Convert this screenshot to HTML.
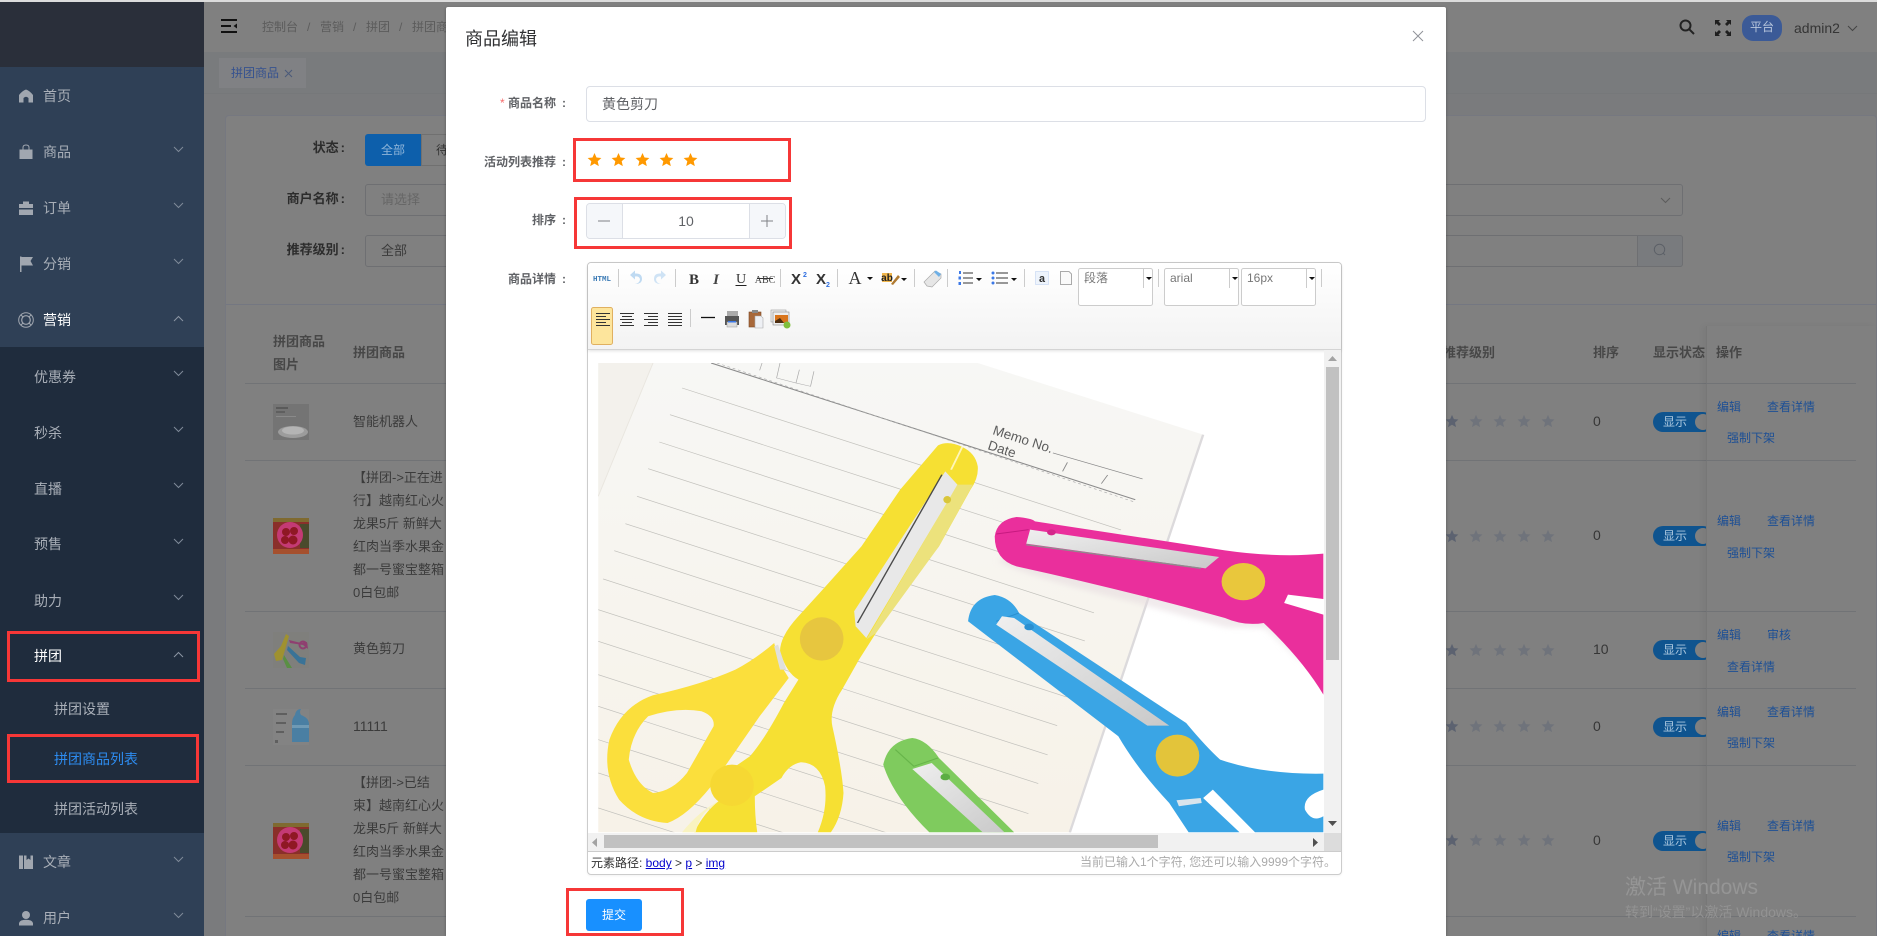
<!DOCTYPE html>
<html lang="zh">
<head>
<meta charset="utf-8">
<title>商品编辑</title>
<style>
html{margin:0;padding:0;width:1877px;height:936px;overflow:hidden;background:#7a7b7d}
body{margin:0;padding:0;background:#7a7b7d;position:relative;width:1877px;height:936px;overflow:hidden;font-family:"Liberation Sans","Noto Sans CJK SC",sans-serif;font-size:13px;color:#3a3a3a}
div,span,a{position:absolute;white-space:nowrap;line-height:20px}
svg{position:absolute;overflow:hidden}
.b{box-sizing:border-box}
.side{color:#a9afb8;font-size:14px}
.lab{font-size:13px;font-weight:700;color:#2c2c2c;text-align:right;width:130px;left:215px}
.lab u,.ml u{position:static;text-decoration:none;margin-left:2px}
.ml u{margin-left:6px}
.th{font-size:13px;font-weight:700;color:#474747}
.td{font-size:13px;color:#3b3b3b;left:353px}
.num{font-size:14px;color:#363636;left:1593px}
.lk{font-size:12px;color:#1d4f95}
.line{left:245px;width:1611px;height:1px;background:#717376}
.sw{left:1653px;width:60px;height:20px;border-radius:10px;background:#0f548f;overflow:hidden}
.sw span{left:10px;top:0;font-size:12px;color:#a9c6de}
.sw i{position:absolute;left:42px;top:2px;width:16px;height:16px;border-radius:50%;background:#808080}
.ml{font-size:12px;font-weight:700;color:#606266;text-align:right;width:130px;left:436px}
.red{box-sizing:border-box;border:3px solid #f63737;z-index:50}
</style>
</head>
<body>
<svg width="0" height="0" style="position:absolute"><defs>
<symbol id="st" viewBox="0 0 24 24"><path d="M12 1.500l3.200 7.200 7.800.8-5.900 5.200 1.800 7.800-6.900-4-6.900 4 1.800-7.800L1 9.500l7.800-.8z"/></symbol>
<symbol id="ch" viewBox="0 0 11 7"><path d="M1 1l4.500 4.500L10 1" fill="none" stroke="currentColor" stroke-width="1"/></symbol>
<symbol id="up" viewBox="0 0 11 7"><path d="M1 6L5.500 1.500 10 6" fill="none" stroke="currentColor" stroke-width="1"/></symbol>
</defs></svg>

<!-- top strip -->
<div style="left:0;top:0;width:1877px;height:2px;background:#dcdcdc;z-index:60"></div>

<!-- sidebar -->
<div style="left:0;top:2px;width:204px;height:65px;background:#2a2f3a"></div>
<div style="left:0;top:67px;width:204px;height:280px;background:#2f4056"></div>
<div style="left:0;top:347px;width:204px;height:486px;background:#1f2c3d"></div>
<div style="left:0;top:833px;width:204px;height:103px;background:#2f4056"></div>

<svg style="left:18px;top:88px" width="16" height="16" fill="#a1a7b0"><path d="M8 1.500Q12 3 15 7V14.500H10.500V10Q8 7.500 5.500 10V14.500H1V7Q4 3 8 1.500Z"/></svg>
<div class="side" style="left:43px;top:86px">首页</div>
<svg style="left:18px;top:144px" width="16" height="16" fill="#a1a7b0"><path d="M1.500 5.500H14.500V15H1.500Z"/><path d="M5 6V3.500Q5 1 8 1Q11 1 11 3.500V6" fill="none" stroke="#a1a7b0"/></svg>
<div class="side" style="left:43px;top:142px">商品</div>
<svg style="left:18px;top:200px" width="16" height="16" fill="#a1a7b0"><path d="M5 4V1.500H11V4H15V8H1V4ZM1 9.500H15V15H1Z"/></svg>
<div class="side" style="left:43px;top:198px">订单</div>
<svg style="left:18px;top:256px" width="16" height="16" fill="#a1a7b0"><path d="M2 .5H3.500V16H2ZM3.500 1H15L12.500 5 15 9.500H3.500Z"/></svg>
<div class="side" style="left:43px;top:254px">分销</div>
<svg style="left:18px;top:312px" width="16" height="16" fill="none" stroke="#a1a7b0"><circle cx="8" cy="8" r="7.300"/><circle cx="8" cy="8" r="4.300" stroke-width="1.200"/><path d="M3 3l2 2M13 3l-2 2M3 13l2-2M13 13l-2-2"/></svg>
<div class="side" style="left:43px;top:310px;color:#fff">营销</div>
<div class="side" style="left:34px;top:367px">优惠券</div>
<div class="side" style="left:34px;top:423px">秒杀</div>
<div class="side" style="left:34px;top:479px">直播</div>
<div class="side" style="left:34px;top:534px">预售</div>
<div class="side" style="left:34px;top:591px">助力</div>
<div class="side" style="left:34px;top:646px;color:#fff">拼团</div>
<div class="side" style="left:54px;top:699px">拼团设置</div>
<div class="side" style="left:54px;top:749px;color:#2d8cf0">拼团商品列表</div>
<div class="side" style="left:54px;top:799px">拼团活动列表</div>
<svg style="left:18px;top:854px" width="16" height="16" fill="#a1a7b0"><path d="M1 1.500H5V15H1ZM6 1.500H8.500V6L10.500 4.500 12.500 6V1.500H15V15H6Z"/></svg>
<div class="side" style="left:43px;top:852px">文章</div>
<svg style="left:18px;top:910px" width="16" height="16" fill="#a1a7b0"><circle cx="8" cy="5" r="4"/><path d="M1 15.500V13Q2 9.800 8 9.800Q14 9.800 15 13V15.500Z"/></svg>
<div class="side" style="left:43px;top:908px">用户</div>

<svg style="left:173px;top:146px;color:#7f8a99" width="11" height="7"><use href="#ch"/></svg>
<svg style="left:173px;top:202px;color:#7f8a99" width="11" height="7"><use href="#ch"/></svg>
<svg style="left:173px;top:258px;color:#7f8a99" width="11" height="7"><use href="#ch"/></svg>
<svg style="left:173px;top:315px;color:#8b95a3" width="11" height="7"><use href="#up"/></svg>
<svg style="left:173px;top:370px;color:#7f8a99" width="11" height="7"><use href="#ch"/></svg>
<svg style="left:173px;top:426px;color:#7f8a99" width="11" height="7"><use href="#ch"/></svg>
<svg style="left:173px;top:482px;color:#7f8a99" width="11" height="7"><use href="#ch"/></svg>
<svg style="left:173px;top:538px;color:#7f8a99" width="11" height="7"><use href="#ch"/></svg>
<svg style="left:173px;top:594px;color:#7f8a99" width="11" height="7"><use href="#ch"/></svg>
<svg style="left:173px;top:651px;color:#8b95a3" width="11" height="7"><use href="#up"/></svg>
<svg style="left:173px;top:856px;color:#7f8a99" width="11" height="7"><use href="#ch"/></svg>
<svg style="left:173px;top:912px;color:#7f8a99" width="11" height="7"><use href="#ch"/></svg>

<!-- header -->
<div style="left:204px;top:2px;width:1673px;height:50px;background:#808080"></div>
<svg style="left:221px;top:18px" width="17" height="16" fill="#111"><path d="M0 1H16V3H0ZM0 7H10V9H0ZM0 13H16V15H0ZM16 5.500V10.500L12.500 8Z"/></svg>
<div style="left:262px;top:17px;font-size:12px;color:#5c5c5c">控制台</div>
<div style="left:307px;top:17px;font-size:12px;color:#5c5c5c">/</div>
<div style="left:320px;top:17px;font-size:12px;color:#5c5c5c">营销</div>
<div style="left:353px;top:17px;font-size:12px;color:#5c5c5c">/</div>
<div style="left:366px;top:17px;font-size:12px;color:#5c5c5c">拼团</div>
<div style="left:399px;top:17px;font-size:12px;color:#5c5c5c">/</div>
<div style="left:412px;top:17px;font-size:12px;color:#5c5c5c">拼团商品</div>

<svg style="left:1679px;top:19px" width="16" height="16" fill="none" stroke="#222" stroke-width="2"><circle cx="6.500" cy="6.500" r="5"/><path d="M10.300 10.300L15 15"/></svg>
<svg style="left:1715px;top:20px" width="16" height="16" fill="#1f1f1f"><path d="M0 0H5L3.500 1.500 6 4 4 6 1.500 3.500 0 5ZM16 0V5L14.500 3.500 12 6 10 4 12.500 1.500 11 0ZM0 16V11L1.500 12.500 4 10 6 12 3.500 14.500 5 16ZM16 16H11L12.500 14.500 10 12 12 10 14.500 12.500 16 11Z"/></svg>
<div style="left:1742px;top:15px;width:40px;height:26px;border-radius:11px;background:#3b5a97"></div>
<div style="left:1750px;top:17px;font-size:12px;color:#b8c6dc">平台</div>
<div style="left:1794px;top:18px;font-size:14px;color:#353535">admin2</div>
<svg style="left:1847px;top:25px;color:#444" width="11" height="7"><use href="#ch"/></svg>

<!-- tabs -->
<div style="left:204px;top:52px;width:1673px;height:42px;background:#797b7d;border-bottom:1px solid #76787a;box-sizing:border-box"></div>
<div style="left:219px;top:58px;width:87px;height:30px;background:#808184"></div>
<div style="left:231px;top:63px;font-size:12px;color:#36528f">拼团商品</div>
<svg style="left:284px;top:69px" width="9" height="9" stroke="#4a5a7a" fill="none"><path d="M1 1l7 7M8 1l-7 7"/></svg>

<!-- card -->
<div class="b" style="left:225px;top:115px;width:1652px;height:821px;background:#808080;border:1px solid #767880;border-bottom:0;border-radius:4px 4px 0 0"></div>
<div style="left:226px;top:304px;width:1650px;height:1px;background:#747781"></div>

<div class="lab" style="top:138px">状态<u>:</u></div>
<div style="left:365px;top:134px;width:56px;height:32px;background:#0d5fab;border-radius:3px 0 0 3px"></div>
<div style="left:381px;top:140px;font-size:12px;color:#8fb5d9">全部</div>
<div class="b" style="left:421px;top:134px;width:40px;height:32px;border:1px solid #707070"></div>
<div style="left:436px;top:140px;font-size:12px;color:#333">待</div>

<div class="lab" style="top:189px">商户名称<u>:</u></div>
<div class="b" style="left:365px;top:184px;width:1318px;height:32px;border:1px solid #6e6f72;border-radius:3px"></div>
<div style="left:381px;top:190px;font-size:13px;color:#666">请选择</div>
<svg style="left:1660px;top:197px;color:#5c5c5c" width="11" height="7"><use href="#ch"/></svg>

<div class="lab" style="top:240px">推荐级别<u>:</u></div>
<div class="b" style="left:365px;top:235px;width:1318px;height:32px;border:1px solid #6e6f72;border-radius:3px"></div>
<div style="left:381px;top:241px;font-size:13px;color:#3a3a3a">全部</div>
<div class="b" style="left:1637px;top:235px;width:46px;height:32px;background:#797b7e;border:1px solid #6e6f72;border-radius:0 3px 3px 0"></div>
<svg style="left:1653px;top:243px" width="14" height="14" fill="none" stroke="#5c6067"><circle cx="6.500" cy="6.500" r="5.200"/><path d="M10 10l2 2"/></svg>

<!-- table -->
<div class="th" style="left:273px;top:332px">拼团商品</div>
<div class="th" style="left:273px;top:355px">图片</div>
<div class="th" style="left:353px;top:343px">拼团商品</div>
<div class="th" style="left:1443px;top:343px">推荐级别</div>
<div class="th" style="left:1593px;top:343px">排序</div>
<div class="th" style="left:1653px;top:343px">显示状态</div>

<div class="line" style="top:383px"></div>
<div class="line" style="top:460px"></div>
<div class="line" style="top:611px"></div>
<div class="line" style="top:688px"></div>
<div class="line" style="top:765px"></div>
<div class="line" style="top:916px"></div>

<div class="td" style="top:412px">智能机器人</div>
<div class="td" style="top:468px">【拼团-&gt;正在进</div>
<div class="td" style="top:491px">行】越南红心火</div>
<div class="td" style="top:514px">龙果5斤 新鲜大</div>
<div class="td" style="top:537px">红肉当季水果金</div>
<div class="td" style="top:560px">都一号蜜宝整箱</div>
<div class="td" style="top:583px">0白包邮</div>
<div class="td" style="top:639px">黄色剪刀</div>
<div class="td" style="top:716px;font-size:14px">11111</div>
<div class="td" style="top:773px">【拼团-&gt;已结</div>
<div class="td" style="top:796px">束】越南红心火</div>
<div class="td" style="top:819px">龙果5斤 新鲜大</div>
<div class="td" style="top:842px">红肉当季水果金</div>
<div class="td" style="top:865px">都一号蜜宝整箱</div>
<div class="td" style="top:888px">0白包邮</div>

<!-- thumbs -->
<svg style="left:273px;top:404px" width="36" height="36"><rect width="36" height="36" fill="#747474"/><rect x="3" y="3" width="12" height="2" fill="#5a5a5a"/><rect x="3" y="7" width="9" height="2" fill="#5f5f5f"/><rect x="3" y="12" width="20" height="1" fill="#8a8a8a"/><ellipse cx="20" cy="28" rx="15" ry="6" fill="#9c9c9c"/><ellipse cx="20" cy="26.500" rx="11" ry="4" fill="#b4b4b4"/></svg>
<svg style="left:273px;top:518px" width="36" height="36"><rect width="36" height="36" fill="#8a2f2a"/><rect y="0" width="36" height="4" fill="#7f6a30"/><rect x="27" y="6" width="9" height="24" fill="#4a4a2c"/><circle cx="17" cy="17" r="13" fill="#c43a74"/><circle cx="13" cy="14" r="4" fill="#8f1824"/><circle cx="21" cy="13" r="4" fill="#8f1824"/><circle cx="12" cy="22" r="4" fill="#8f1824"/><circle cx="20" cy="22" r="4.500" fill="#8f1824"/><rect y="31" width="36" height="5" fill="#a5502e"/></svg>
<svg style="left:273px;top:632px" width="36" height="36"><rect width="36" height="36" fill="#7f7f7c"/><path d="M13 2L8 14 1 22 3 29 9 28 12 18 16 4Z" fill="#9f9130"/><path d="M16 8L28 11 34 10 35 17 30 13 17 11Z" fill="#8f3f70"/><circle cx="30" cy="13" r="3.500" fill="none" stroke="#8f3f70" stroke-width="2"/><path d="M15 14L27 25 33 26 32 33 26 31 14 18Z" fill="#3a7397"/><path d="M11 23L19 36H14L10 27Z" fill="#5a8f44"/></svg>
<svg style="left:273px;top:709px" width="36" height="36"><rect width="36" height="36" fill="#838383"/><rect x="3" y="4" width="11" height="2" fill="#5f5f5f"/><rect x="3" y="13" width="10" height="2" fill="#5f5f5f"/><rect x="3" y="22" width="8" height="2" fill="#5f5f5f"/><rect x="2" y="31" width="3" height="3" fill="#5f5f5f"/><path d="M22 6Q23 0 28 0Q26 3 28 6Q36 9 36 15V33H19V15Q19 9 22 6Z" fill="#4a7fa3"/><rect x="19" y="16" width="17" height="3" fill="#6f9ab5"/></svg>
<svg style="left:273px;top:823px" width="36" height="36"><rect width="36" height="36" fill="#8a2f2a"/><rect y="0" width="36" height="4" fill="#7f6a30"/><rect x="27" y="6" width="9" height="24" fill="#4a4a2c"/><circle cx="17" cy="17" r="13" fill="#c43a74"/><circle cx="13" cy="14" r="4" fill="#8f1824"/><circle cx="21" cy="13" r="4" fill="#8f1824"/><circle cx="12" cy="22" r="4" fill="#8f1824"/><circle cx="20" cy="22" r="4.500" fill="#8f1824"/><rect y="31" width="36" height="5" fill="#a5502e"/></svg>

<!-- stars rows -->
<svg style="left:1445px;top:414px" width="110" height="14"><g fill="#6f737b"><use href="#st" x="0" width="14" height="14" fill="#5c6270"/><use href="#st" x="24" width="14" height="14"/><use href="#st" x="48" width="14" height="14"/><use href="#st" x="72" width="14" height="14"/><use href="#st" x="96" width="14" height="14"/></g></svg>
<svg style="left:1445px;top:529px" width="110" height="14"><g fill="#6f737b"><use href="#st" x="0" width="14" height="14" fill="#5c6270"/><use href="#st" x="24" width="14" height="14"/><use href="#st" x="48" width="14" height="14"/><use href="#st" x="72" width="14" height="14"/><use href="#st" x="96" width="14" height="14"/></g></svg>
<svg style="left:1445px;top:643px" width="110" height="14"><g fill="#6f737b"><use href="#st" x="0" width="14" height="14" fill="#5c6270"/><use href="#st" x="24" width="14" height="14"/><use href="#st" x="48" width="14" height="14"/><use href="#st" x="72" width="14" height="14"/><use href="#st" x="96" width="14" height="14"/></g></svg>
<svg style="left:1445px;top:719px" width="110" height="14"><g fill="#6f737b"><use href="#st" x="0" width="14" height="14" fill="#5c6270"/><use href="#st" x="24" width="14" height="14"/><use href="#st" x="48" width="14" height="14"/><use href="#st" x="72" width="14" height="14"/><use href="#st" x="96" width="14" height="14"/></g></svg>
<svg style="left:1445px;top:833px" width="110" height="14"><g fill="#6f737b"><use href="#st" x="0" width="14" height="14" fill="#5c6270"/><use href="#st" x="24" width="14" height="14"/><use href="#st" x="48" width="14" height="14"/><use href="#st" x="72" width="14" height="14"/><use href="#st" x="96" width="14" height="14"/></g></svg>

<div class="num" style="top:411px">0</div>
<div class="num" style="top:525px">0</div>
<div class="num" style="top:639px">10</div>
<div class="num" style="top:716px">0</div>
<div class="num" style="top:830px">0</div>

<div class="sw" style="top:412px"><span>显示</span><i></i></div>
<div class="sw" style="top:526px"><span>显示</span><i></i></div>
<div class="sw" style="top:640px"><span>显示</span><i></i></div>
<div class="sw" style="top:717px"><span>显示</span><i></i></div>
<div class="sw" style="top:831px"><span>显示</span><i></i></div>

<!-- fixed column -->
<div style="left:1706px;top:326px;width:170px;height:610px;z-index:2;background:linear-gradient(#808080,#808080) 0 0/8px 100% no-repeat;border-left:1px solid #777;box-sizing:border-box;box-shadow:-3px 0 6px rgba(0,0,0,.05)"></div>
<div class="th" style="left:1716px;top:343px;z-index:3">操作</div>
<div class="line" style="left:1706px;width:150px;top:383px;z-index:3"></div>
<div class="line" style="left:1706px;width:150px;top:460px;z-index:3"></div>
<div class="line" style="left:1706px;width:150px;top:611px;z-index:3"></div>
<div class="line" style="left:1706px;width:150px;top:688px;z-index:3"></div>
<div class="line" style="left:1706px;width:150px;top:765px;z-index:3"></div>
<div class="line" style="left:1706px;width:150px;top:916px;z-index:3"></div>

<div class="lk" style="left:1717px;top:397px;z-index:3">编辑</div><div class="lk" style="left:1767px;top:397px;z-index:3">查看详情</div><div class="lk" style="left:1727px;top:428px;z-index:3">强制下架</div>
<div class="lk" style="left:1717px;top:511px;z-index:3">编辑</div><div class="lk" style="left:1767px;top:511px;z-index:3">查看详情</div><div class="lk" style="left:1727px;top:543px;z-index:3">强制下架</div>
<div class="lk" style="left:1717px;top:625px;z-index:3">编辑</div><div class="lk" style="left:1767px;top:625px;z-index:3">审核</div><div class="lk" style="left:1727px;top:657px;z-index:3">查看详情</div>
<div class="lk" style="left:1717px;top:702px;z-index:3">编辑</div><div class="lk" style="left:1767px;top:702px;z-index:3">查看详情</div><div class="lk" style="left:1727px;top:733px;z-index:3">强制下架</div>
<div class="lk" style="left:1717px;top:816px;z-index:3">编辑</div><div class="lk" style="left:1767px;top:816px;z-index:3">查看详情</div><div class="lk" style="left:1727px;top:847px;z-index:3">强制下架</div>
<svg style="left:1717px;top:926px;z-index:3" width="110" height="10" font-size="12" fill="#1d4f95"><text x="0" y="14">编辑</text><text x="50" y="14">查看详情</text></svg>

<!-- watermark -->
<div style="left:1625px;top:876px;font-size:21px;line-height:24px;color:#959595;z-index:4">激活 Windows</div>
<div style="left:1625px;top:902px;font-size:14px;color:#929292;z-index:4">转到“设置”以激活 Windows。</div>

<!-- modal -->
<div style="left:446px;top:7px;width:1000px;height:929px;background:#fff;z-index:10;box-shadow:0 1px 3px rgba(0,0,0,.3);border-radius:2px 2px 0 0"></div>
<div style="z-index:11;left:0;top:0;width:1877px;height:936px;overflow:hidden">
<div style="left:465px;top:27px;font-size:18px;line-height:24px;color:#303133">商品编辑</div>
<svg style="left:1412px;top:30px" width="12" height="12" stroke="#909399" fill="none"><path d="M1 1l10 10M11 1L1 11"/></svg>

<div class="ml" style="top:93px"><span style="position:static;color:#f56c6c;font-weight:400">* </span>商品名称<u>:</u></div>
<div class="b" style="left:586px;top:86px;width:840px;height:36px;border:1px solid #dcdfe6;border-radius:4px"></div>
<div style="left:602px;top:94px;font-size:14px;color:#606266">黄色剪刀</div>

<div class="ml" style="top:152px">活动列表推荐<u>:</u></div>
<svg style="left:587px;top:152px" width="112" height="15" fill="#ff9900"><use href="#st" x="0" width="15" height="15"/><use href="#st" x="24" width="15" height="15"/><use href="#st" x="48" width="15" height="15"/><use href="#st" x="72" width="15" height="15"/><use href="#st" x="96" width="15" height="15"/></svg>

<div class="ml" style="top:210px">排序<u>:</u></div>
<div class="b" style="left:586px;top:203px;width:200px;height:36px;border:1px solid #dcdfe6;border-radius:4px"></div>
<div class="b" style="left:587px;top:204px;width:36px;height:34px;background:#f5f7fa;border-right:1px solid #dcdfe6;border-radius:3px 0 0 3px"></div>
<div class="b" style="left:749px;top:204px;width:36px;height:34px;background:#f5f7fa;border-left:1px solid #dcdfe6;border-radius:0 3px 3px 0"></div>
<svg style="left:598px;top:215px" width="12" height="12" stroke="#808286" fill="none"><path d="M0 6H12"/></svg>
<svg style="left:761px;top:215px" width="12" height="12" stroke="#808286" fill="none"><path d="M0 6H12M6 0V12"/></svg>
<div style="left:676px;top:211px;width:20px;text-align:center;font-size:14px;color:#606266">10</div>

<div class="ml" style="top:269px">商品详情<u>:</u></div>

<!-- editor -->
<div class="b" style="left:587px;top:262px;width:755px;height:613px;border:1px solid #ccc;border-radius:4px;background:#fff;box-shadow:0 1px 2px rgba(0,0,0,.05)"></div>
<div style="left:588px;top:263px;width:753px;height:86px;background:linear-gradient(#fff,#f3f3f3);border-bottom:1px solid #d4d4d4;box-shadow:0 1px 3px rgba(0,0,0,.12);border-radius:3px 3px 0 0"></div>

<svg style="left:587px;top:262px" width="755" height="88" viewBox="587 262 755 88">
<g stroke="#ccc"><path d="M618.500 269V287M675.500 269V287M780.500 269V287M837.500 269V287M914.500 269V287M947.500 269V287M1024.500 269V287M1158.500 269V287M1321.500 269V287M690.500 309V327"/></g>
<text x="602" y="281" font-size="7.500" font-weight="700" text-anchor="middle" fill="#3a7ab5" font-family="Liberation Mono">HTML</text>
<path d="M635 284Q640 283 640 279Q639 276 635 276.500V279.500L630 275 635 270.500V273.500Q642 273 642 279Q642 284 635 284Z" fill="#bfdaf2"/>
<path d="M661 284Q656 283 656 279Q657 276 661 276.500V279.500L666 275 661 270.500V273.500Q654 273 654 279Q654 284 661 284Z" fill="#cfe3f5"/>
<text x="694" y="284" font-size="15" font-weight="700" text-anchor="middle" fill="#333" font-family="Liberation Serif">B</text>
<text x="716" y="284" font-size="15" font-style="italic" font-weight="700" text-anchor="middle" fill="#444" font-family="Liberation Serif">I</text>
<text x="741" y="283" font-size="14" text-anchor="middle" fill="#333" font-family="Liberation Serif">U</text>
<path d="M735.500 285.500H746.500" stroke="#222"/>
<text x="765" y="283" font-size="10" text-anchor="middle" fill="#444" font-family="Liberation Serif">ABC</text>
<path d="M757 278.500H773" stroke="#333"/>
<text x="796" y="284" font-size="15" font-weight="700" text-anchor="middle" fill="#333" font-family="Liberation Sans">X</text>
<text x="803" y="277" font-size="7" font-weight="700" fill="#2f6fe0" font-family="Liberation Sans">2</text>
<text x="821" y="284" font-size="15" font-weight="700" text-anchor="middle" fill="#333" font-family="Liberation Sans">X</text>
<text x="826" y="287" font-size="7" font-weight="700" fill="#2f6fe0" font-family="Liberation Sans">2</text>
<text x="855" y="284" font-size="18" text-anchor="middle" fill="#333" font-family="Liberation Serif">A</text>
<path d="M867 277H873L870 280ZM901 278H907L904 281ZM976 278H982L979 281ZM1011 278H1017L1014 281Z" fill="#111"/>
<rect x="882" y="273" width="10" height="9" fill="#f0b64d"/>
<text x="887" y="281" font-size="10" font-weight="700" text-anchor="middle" fill="#222" font-family="Liberation Sans">ab</text>
<path d="M891 284L898 275 900 277 893 285Z" fill="#b07a30"/>
<path d="M924 282L935 271 941 274 941 278 932 287 927 286Z" fill="#e6e6e6" stroke="#aaa" stroke-width=".7"/><path d="M934 272L936 270.500 941 274 939 277Z" fill="#6fb0e6"/>
<g stroke="#333"><path d="M963 273H973M963 278H973M963 283H973M996 273H1008M996 278H1008M996 283H1008"/></g>
<g fill="#3b78e7"><rect x="959" y="271" width="2" height="3"/><rect x="958.500" y="276.500" width="2.500" height="3"/><rect x="958.500" y="282" width="2.500" height="3"/><circle cx="993" cy="273" r="1.500"/><circle cx="993" cy="278" r="1.500"/><circle cx="993" cy="283" r="1.500"/></g>
<rect x="1035.500" y="271.500" width="13" height="13" fill="#eef4fc" stroke="#b8cdf0" stroke-dasharray="1 1"/>
<text x="1042" y="282" font-size="11" font-weight="700" text-anchor="middle" fill="#333" font-family="Liberation Mono">a</text>
<path d="M1060.500 271.500H1069L1071.500 274V284.500H1060.500Z" fill="#fafafa" stroke="#aaa"/>

<g fill="#fff" stroke="#ccc"><rect x="1078.500" y="268.500" width="74" height="37" rx="2"/><rect x="1164.500" y="268.500" width="74" height="37" rx="2"/><rect x="1241.500" y="268.500" width="74" height="37" rx="2"/></g>
<path d="M1143.500 269V288M1229.500 269V288M1306.500 269V288" stroke="#ccc"/>
<path d="M1146 277H1152L1149 280ZM1232 277H1238L1235 280ZM1309 277H1315L1312 280Z" fill="#111"/>
<text x="1084" y="282" font-size="12" fill="#777" font-family="Noto Sans CJK SC,sans-serif">段落</text>
<text x="1170" y="282" font-size="12" fill="#777" font-family="Liberation Sans">arial</text>
<text x="1247" y="282" font-size="12" fill="#777" font-family="Liberation Sans">16px</text>

<rect x="591.500" y="307.500" width="21" height="37" rx="2" fill="#fde59c" stroke="#e0b060"/>
<g stroke="#333">
<path d="M596 313.500H610M596 316.500H606M596 319.500H610M596 322.500H606M596 325.500H610"/>
<path d="M620 313.500H634M622 316.500H632M620 319.500H634M622 322.500H632M620 325.500H634"/>
<path d="M644 313.500H658M648 316.500H658M644 319.500H658M648 322.500H658M644 325.500H658"/>
<path d="M668 313.500H682M668 316.500H682M668 319.500H682M668 322.500H682M668 325.500H682"/>
<path d="M701 317.500H715" stroke="#111" stroke-width="1.300"/>
</g>
<rect x="727" y="311" width="11" height="6" fill="#aaa"/><rect x="725" y="316" width="14" height="9" fill="#555"/><rect x="727" y="322" width="10" height="5" fill="#ddd" stroke="#999" stroke-width=".5"/><rect x="728" y="321" width="8" height="1.500" fill="#3b78e7"/>
<rect x="749" y="312" width="12" height="15" fill="#a8683a" stroke="#7a4a26" stroke-width=".6"/><rect x="752" y="310" width="6" height="3" fill="#888"/><path d="M755 316H761L763 318V328H755Z" fill="#eef0f4" stroke="#aaa" stroke-width=".6"/>
<rect x="771" y="310" width="15" height="12" fill="#f0f0f0" stroke="#999" stroke-width=".6"/><rect x="773" y="312" width="16" height="13" fill="#eee" stroke="#888" stroke-width=".6"/><rect x="775" y="315" width="13" height="8" fill="#d9751c"/><path d="M775 321L780 318 784 323H775Z" fill="#4d2e12"/><circle cx="787" cy="325" r="3.500" fill="#7fbf3c"/>
</svg>

<!-- editor picture -->
<svg style="left:598px;top:363px" width="726" height="470" viewBox="0 0 726 470">
<defs>
<linearGradient id="pap" x1="0" y1="0" x2="0" y2="1"><stop offset="0" stop-color="#f7f7f5"/><stop offset="1" stop-color="#f7f2e8"/></linearGradient>
<linearGradient id="sil" x1="0" y1="0" x2="1" y2="1"><stop offset="0" stop-color="#efefef"/><stop offset="1" stop-color="#c9c9c9"/></linearGradient>
<clipPath id="lc"><path d="M0 0H1217L892 1448H0Z"/></clipPath>
<filter id="bl2"><feGaussianBlur stdDeviation="8"/></filter>
</defs>
<rect width="726" height="470" fill="#fff"/>
<g transform="translate(-8 -13.330) scale(.4847 .3333)">
<path d="M17 40H800L1265 255 990 1448H17Z" fill="url(#pap)"/>
<path d="M17 40H130L17 440Z" fill="#f3f1ec"/>
<path d="M130 40L17 440" stroke="#e9e6df" stroke-width="2" fill="none"/>
<path d="M1265 255L990 1448" stroke="#dcdadc" stroke-width="5" fill="none"/>
<g clip-path="url(#lc)" stroke="#c2c1bc" stroke-width="2" fill="none">
<path d="M190 115L1300 637"/><path d="M165 195L1300 729"/><path d="M143 277L1300 821"/><path d="M120 357L1300 912"/><path d="M97 440L1300 1005"/><path d="M73 522L1300 1099"/><path d="M50 603L1300 1191"/><path d="M27 688L1300 1286"/><path d="M17 780L1300 1383"/><path d="M17 875L1300 1478"/><path d="M17 975L1300 1578"/><path d="M17 1070L1300 1673"/><path d="M17 1170L1300 1773"/><path d="M17 1270L1300 1873"/><path d="M17 1375L1300 1978"/>
</g>
<path d="M250 40L1125 450" stroke="#8a8a8a" stroke-width="3" fill="none"/><path d="M262 40L1125 458" stroke="#b0b0b0" stroke-width="2" stroke-dasharray="6 6" fill="none"/>
<path d="M955 310L1140 388M985 338L975 365M1068 376L1055 402" stroke="#888" stroke-width="2" fill="none"/>
<path d="M355 40L350 62M392 40L385 85 425 100 432 60M425 100L455 110 462 65" stroke="#aaa" stroke-width="1.500" fill="none"/>

<!-- pink -->
<path d="M840 620Q880 660 1120 745L1310 820 1390 822 1470 930V800L1380 740 1310 640 920 540Z" fill="#e5dade" filter="url(#bl2)" transform="translate(4 14)" opacity=".55"/>
<path d="M835 560Q840 510 880 502Q910 505 918 515L1310 602Q1420 625 1513 612V748L1440 735 1432 760 1513 795V1035Q1470 930 1390 820Q1350 830 1310 805Q1100 720 880 650Q835 630 835 560Z" fill="#ea2f9c"/>
<path d="M838 553L905 540" stroke="#c71a80" stroke-width="3" fill="none"/>
<path d="M908 540L1298 622 1270 656 1190 640 900 582Z" fill="url(#sil)"/><path d="M900 585L1260 656" stroke="#8d8d8d" stroke-width="4" fill="none"/>
<ellipse cx="952" cy="548" rx="9" ry="9" fill="#d4268a"/>
<ellipse cx="1348" cy="696" rx="45" ry="56" fill="#e9c73c"/>

<!-- blue -->
<path d="M780 815Q785 745 835 736Q870 745 885 790L1230 1120Q1270 1190 1300 1230Q1390 1275 1513 1272V1320Q1470 1340 1475 1380Q1490 1420 1513 1400V1448H1372L1285 1320 1265 1345 1340 1448H1235L1195 1360Q1130 1260 1090 1160Z" fill="#3aa5e5"/>
<path d="M838 815L885 790" stroke="#2a8fd0" stroke-width="3" fill="none"/>
<path d="M850 800L875 805 1195 1128 1150 1128 838 825Z" fill="url(#sil)"/>
<ellipse cx="906" cy="832" rx="10" ry="10" fill="#2a8fd0"/>
<ellipse cx="1212" cy="1218" rx="45" ry="63" fill="#e3c43a"/>
<path d="M1210 1352L1260 1345 1262 1360 1215 1370Z" fill="#d8e4ec"/>

<!-- green -->
<path d="M605 1245Q615 1175 665 1165Q695 1170 720 1225L875 1448H700Q625 1340 605 1245Z" fill="#7fcb5e"/>
<path d="M630 1200L668 1250 718 1225" stroke="#67b54a" stroke-width="3" fill="none"/>
<path d="M665 1258L705 1240 855 1448H810Z" fill="url(#sil)"/>
<ellipse cx="733" cy="1282" rx="10" ry="10" fill="#5cae44"/>

<!-- yellow handle ring -->
<path fill-rule="evenodd" fill="#fbdf3c" d="M380 880Q340 930 300 960Q230 1005 130 1037Q65 1070 40 1170Q25 1270 60 1350Q100 1415 160 1420Q200 1400 250 1310L350 1100 410 985 395 950Q385 910 380 880ZM120 1100Q180 1072 230 1085Q258 1100 255 1130L200 1270Q170 1325 130 1330Q95 1305 80 1230Q85 1150 120 1100Z"/>
<!-- yellow body -->
<path fill="#f6e033" d="M718 287Q740 272 768 292Q795 310 800 350Q802 385 785 420L720 590 650 720 590 850 555 930 520 1020Q493 1080 500 1130Q520 1260 523 1330Q520 1400 497 1448H470Q490 1380 485 1310Q475 1240 435 1238Q410 1245 395 1285L340 1340Q340 1400 345 1448H215Q235 1390 265 1355L250 1300 330 1220Q360 1170 400 1060L430 990Q405 970 392 905Q392 860 430 800L480 720 560 590 640 420Z"/>
<path d="M790 405L758 405 570 870 590 850 720 590Z" fill="#ece27c"/>
<path d="M380 890L392 960 405 960 388 885Z" fill="#e0e0dc"/>
<path d="M733 365L758 405 742 445 570 865 548 830 545 785Z" fill="#e8e8e8"/>
<path d="M726 375L552 820" stroke="#4a4a4a" stroke-width="3" fill="none"/>
<ellipse cx="737" cy="450" rx="8" ry="11" fill="#d9c63a"/>
<path d="M768 292L745 360" stroke="#fff6b8" stroke-width="4" fill="none"/>
<ellipse cx="478" cy="868" rx="45" ry="65" fill="#e7c63f"/>
<ellipse cx="293" cy="1307" rx="45" ry="62" fill="#f6d833"/>
<path d="M190 1448Q225 1385 265 1355L240 1385Q225 1405 218 1448Z" fill="#f9f3c0"/>
</g>
<text x="394" y="71" font-size="13.500" fill="#5c5c5c" font-family="Liberation Sans" transform="rotate(18 394 71)">Memo No.</text>
<text x="389" y="86" font-size="13.500" fill="#5c5c5c" font-family="Liberation Sans" transform="rotate(18 389 86)">Date</text>
</svg>

<!-- vertical scrollbar -->
<div style="left:1324px;top:350px;width:17px;height:483px;background:#f1f1f1"></div>
<div style="left:1326px;top:367px;width:13px;height:293px;background:#c1c1c1"></div>
<svg style="left:1328px;top:356px" width="9" height="6" fill="#a3a3a3"><path d="M0 5L4.500 0 9 5Z"/></svg>
<svg style="left:1328px;top:821px" width="9" height="6" fill="#505050"><path d="M0 0L4.500 5 9 0Z"/></svg>
<!-- horizontal scrollbar -->
<div style="left:588px;top:833px;width:736px;height:18px;background:#f1f1f1"></div>
<div style="left:1324px;top:833px;width:17px;height:18px;background:#dcdcdc"></div>
<div style="left:604px;top:835px;width:554px;height:13px;background:#c1c1c1"></div>
<svg style="left:592px;top:838px" width="6" height="9" fill="#a3a3a3"><path d="M5 0L0 4.500 5 9Z"/></svg>
<svg style="left:1313px;top:838px" width="6" height="9" fill="#505050"><path d="M0 0L5 4.500 0 9Z"/></svg>
<div style="left:588px;top:851px;width:753px;height:1px;background:#ccc"></div>

<div style="left:591px;top:853px;font-size:12px;color:#333">元素路径: <span style="position:static;color:#00c;text-decoration:underline">body</span> &gt; <span style="position:static;color:#00c;text-decoration:underline">p</span> &gt; <span style="position:static;color:#00c;text-decoration:underline">img</span></div>
<div style="right:541px;top:852px;font-size:12px;color:#aaa">当前已输入1个字符, 您还可以输入9999个字符。</div>

<div style="left:586px;top:899px;width:56px;height:32px;background:#1890ff;border-radius:3px"></div>
<div style="left:602px;top:905px;font-size:12px;color:#fff">提交</div>
</div>

<!-- annotation boxes -->
<div class="red" style="left:7px;top:631px;width:193px;height:51px"></div>
<div class="red" style="left:7px;top:734px;width:192px;height:49px"></div>
<div class="red" style="left:573px;top:138px;width:218px;height:44px"></div>
<div class="red" style="left:574px;top:197px;width:218px;height:52px"></div>
<div class="red" style="left:566px;top:888px;width:118px;height:48px"></div>
</body>
</html>
